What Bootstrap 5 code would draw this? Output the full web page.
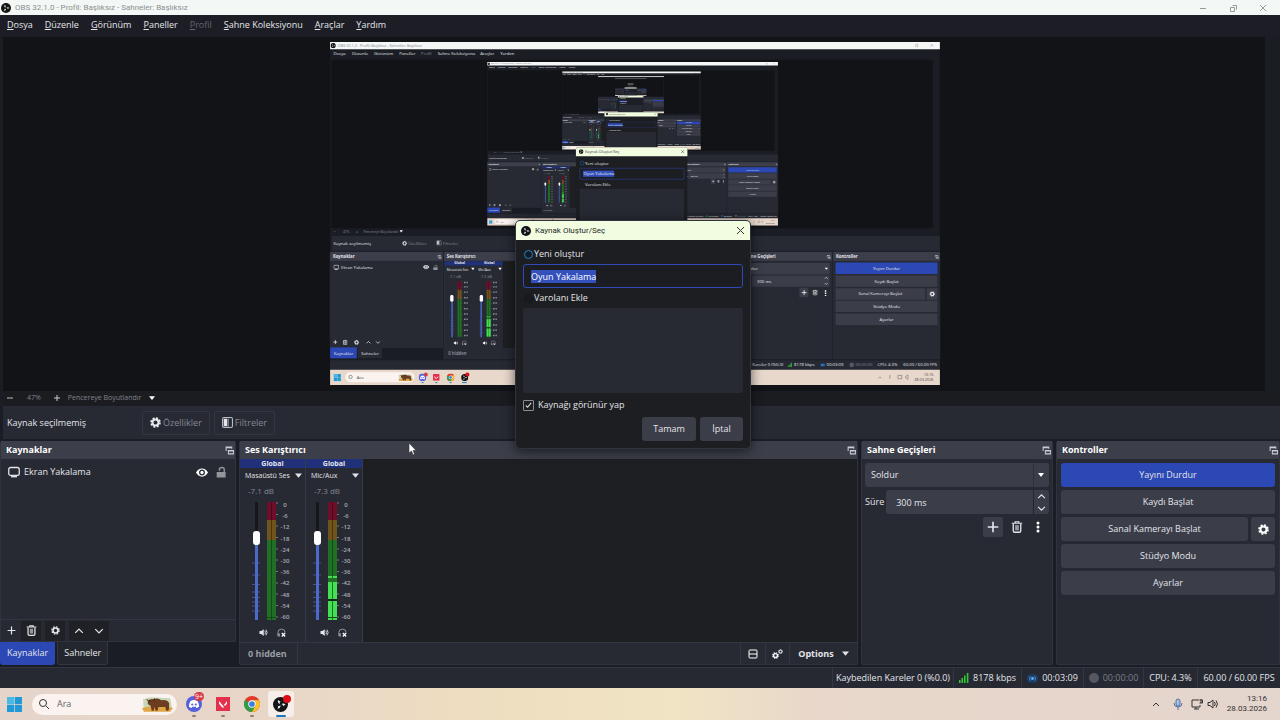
<!DOCTYPE html>
<html lang="tr" data-bs-theme="dark">
<head>
<meta charset="utf-8">
<meta name="viewport" content="width=device-width, initial-scale=1">
<title>OBS 32.1.0</title>
<link href="https://cdn.jsdelivr.net/npm/bootstrap@5.3.0/dist/css/bootstrap.min.css" rel="stylesheet">
<style>
:root{--win:#1e1f24;--panel:#272a33;--head:#3c3f4a;--ctl:#3b3d49;--blue:#2c48b4;--line:#363944;--ink:#e4e5e9;--dim:#858892}
body{font:9px/12px "Open Sans","Noto Sans",sans-serif;color:var(--ink);background:#1b1d25;overflow:hidden}
svg{display:block;flex:none}
button,.btn{font:inherit;color:inherit}
a{color:inherit;text-decoration:none}
.titlebar{height:15px;background:#f3f7f5;color:#8d9090;font-family:Roboto,sans-serif;font-size:8px;padding:0 13px 0 1px}
.menubar{height:20px;background:#1d1e25;padding:0 7px}
.menubar a{padding:0;margin-right:12px}
.menubar a::first-letter{text-decoration:underline}
.menubar .disabled{color:#63656e}
.stage{background:#121317;margin:2px 15px 0 3px;padding:5px 0 6px 2px;height:354px;min-height:0}
.zoombar{height:14px;background:#1b1c20;margin-left:3px;color:#7f828b;font-size:7px;padding-left:4px}
.flat{background:none;border:0;padding:0;display:flex;align-items:center;justify-content:center}
.srcbar{height:33px;background:var(--panel);margin:1px 0 2px 3px;padding-left:4px}
.ghost{height:24px;border:1px solid #343741;border-radius:2px;background:none;color:#858892;padding:0 7px;display:flex;align-items:center;gap:2px}
.docks{gap:3px;height:224px}
.dock{background:var(--panel);border:1px solid #30333d;border-top:0;border-radius:2px}
.dock-title{height:18px;background:var(--head);font-weight:700;font-size:9px;margin:0;padding:0 1px 0 5px;line-height:12px}
.left{width:236px}.trans{width:192px}.ctrl{width:224px}
.src-row{height:26px;padding:0 8px 0 7px}
.toolrow{height:22px;border-top:1px solid #343741}
.tool{width:20px;height:20px;background:#1f2127;border-radius:2px}
.tabx{height:23px;border:1px solid #343741;border-top:0;background:#23262d;padding:0 6px;border-radius:0 0 3px 3px}
.tabx.on{background:var(--blue);border-color:var(--blue)}
.strip{width:66px;--inset:12px;background:var(--panel);border-right:1px solid #373b48}
.strip.narrow{width:57px;--inset:7px}
.strip-tag{height:9px;background:#203079;font-size:7px;font-weight:700;line-height:9px}
.strip-name{height:15px;font-size:7px;padding:0 3px 0 5px;white-space:nowrap}
.db{height:16px;font-size:8px;line-height:16px;padding-left:8px;color:#858892}
.meter{height:118px;padding-left:var(--inset);margin-top:3px}
.track{margin-right:7px}
.listen{padding-left:calc(var(--inset) + 7px);gap:8px}
.fader{-webkit-appearance:none;appearance:none;writing-mode:vertical-lr;direction:rtl;width:8px;height:118px;margin:0;padding:0;background:linear-gradient(#17181c 0 36px,#4c69cc 36px) center/3px 100% no-repeat}
.fader::-webkit-slider-runnable-track{background:none}
.fader::-webkit-slider-thumb{-webkit-appearance:none;width:7px;height:14px;background:#fff;border-radius:3px}
.scale{font-size:6px;line-height:6px;font-weight:600;color:#a9acb5;width:14px;text-align:center}
.mixfoot{height:22px;border-top:1px solid #343741;font-weight:700;line-height:12px}
.mixfoot>*{border-left:1px solid #343741;height:100%}
.field{background-color:var(--ctl);border:0;border-radius:3px;color:var(--ink);font:inherit;height:24px;min-width:0}
.pick{-webkit-appearance:none;appearance:none;padding:0 6px;background-image:url("data:image/svg+xml,%3Csvg xmlns='http://www.w3.org/2000/svg' viewBox='0 0 16 24'%3E%3Cpath d='M0 0v24' stroke='%2323252c'/%3E%3Cpath d='M5 10h6l-3 4z' fill='%23fff'/%3E%3C/svg%3E");background-repeat:no-repeat;background-position:right center;background-size:16px 24px}
.spin{width:16px;border-left:1px solid #23252c;background:var(--ctl);border-radius:0 3px 3px 0}
.wide{background:var(--ctl);border:0;border-radius:3px;height:24px;padding:0}
.wide.on{background:var(--blue)}
.status{height:21px;background:#262932;border-top:1px solid #343741;margin-top:2px}
.status>div{border-left:1px solid #343741;display:flex;align-items:center;justify-content:center;gap:4px;white-space:nowrap}
.taskbar{height:32px;background:linear-gradient(90deg,#e5d4ca 0,#e8d7c8 22%,#eeddc0 36%,#f0e4c4 53%,#e8d7ca 64%,#e4d5cd 100%);color:#333;padding:0 13px 0 7px}
.find{width:145px;height:21px;border-radius:11px;background:#faf3ef;padding:0 4px 0 7px;margin:0 10px}
.find input{border:0;background:none;outline:0;width:70px;font-size:9px;color:#333;padding:0}
.find input::placeholder{color:#666;opacity:1}
.app{width:26px;height:26px;margin-right:3px;border-radius:3px;position:relative}
.app.on{background:#f6efe9}
.app::after{content:"";position:absolute;left:11px;bottom:0;width:4px;height:2px;border-radius:1px;background:#8b807b}
.app.on::after{left:8px;width:10px;background:#1c78c4}
.count{position:absolute;left:13px;top:1px;background:#d33c48;color:#fff;font-size:7px;line-height:9px;border-radius:5px;padding:0 1px}
.chev{margin-right:13px}
.clock{font-family:Roboto,sans-serif;font-size:8px;line-height:10px}
.dlg{position:absolute;left:515px;top:220px;width:236px;background:#1d1e22;border:1px solid #30343c;border-radius:5px;overflow:hidden;box-shadow:0 2px 12px #0009}
.dlg-title{height:19px;background:#f1fce1;color:#252a25;font-family:Roboto,sans-serif;font-size:8px;padding:0 5px}
.dlg-body{padding:8px 7px 7px}
.dlg .row-opt{height:12px}
.ring{-webkit-appearance:none;appearance:none;width:9px;height:9px;border:1px solid #17181b;border-radius:50%;margin:0 1px;background:#191a1d}
.ring:checked{border-color:#1c86d6}
.name-in{background:#1c1d22;border:1px solid #2f4bb8;border-radius:3px;height:24px;padding:0 7px;outline:0;color:#fff}
.name-in::selection{background:#3350bd;color:#fff}
.listing{height:85px;background:var(--panel);border-radius:3px}
.visible-opt{gap:4px;margin-top:6px}
.answers{gap:4px;margin-top:6px}
.tick{-webkit-appearance:none;appearance:none;width:11px;height:11px;margin:0;border:1px solid #8b8d92;border-radius:1px;background:url("data:image/svg+xml,%3Csvg xmlns='http://www.w3.org/2000/svg' viewBox='0 0 10 10'%3E%3Cpath d='M2 5l2 2 4-5' fill='none' stroke='%23dddddd' stroke-width='1.2'/%3E%3C/svg%3E")}
.answer{height:24px;background:var(--ctl);border:0;border-radius:3px}
.pointer{position:absolute;left:408px;top:442px}
.preview text{font-family:"Open Sans","Noto Sans",sans-serif;font-size:9px;fill:#e4e5e9}
.preview .b{font-weight:700}.preview .g{fill:#858892}.preview .k{fill:#444}.preview .c{text-anchor:middle}
.preview .e{font-size:8px}.preview .t{font-size:7px}
</style>
</head>
<body class="d-flex flex-column min-vh-100">
<svg width="0" height="0" class="position-absolute" aria-hidden="true">
  <symbol id="i-obs" viewBox="0 0 20 20"><circle cx="10" cy="10" r="10" fill="#121416"/><g fill="#e6e9e7" transform="translate(1.500 1.500) scale(.85)"><path id="b1" d="M6.500 2.500C5 5 6 8.500 9.300 9.300 8.300 7.500 8.500 6 10.500 5.300 9 5 7 4.500 6.500 2.500z"/><use href="#b1" transform="rotate(120 10 10)"/><use href="#b1" transform="rotate(240 10 10)"/></g></symbol>
  <symbol id="i-gear" viewBox="0 0 16 16"><circle cx="8" cy="8" r="4.400" fill="none" stroke="currentColor" stroke-width="3"/><circle cx="8" cy="8" r="6.500" fill="none" stroke="currentColor" stroke-width="2.400" stroke-dasharray="2.900 2.205"/></symbol>
  <symbol id="i-pop" viewBox="0 0 16 16"><path d="M2 9V2h10v3M2 3h10" fill="none" stroke="#c9ccd3" stroke-width="1.800"/><path d="M6 8h9v6H6zM6 9h9" fill="none" stroke="#c9ccd3" stroke-width="1.800"/></symbol>
  <symbol id="i-trash" viewBox="0 0 16 16"><path d="M1 3h14M5.500 2.500V1h5v1.500" fill="none" stroke="currentColor" stroke-width="1.600"/><path d="M3 3.500V13q0 2 2 2h6q2 0 2-2V3.500" fill="none" stroke="currentColor" stroke-width="1.800"/><path d="M5.500 5.500h5v7h-5z" fill="currentColor" opacity=".6"/></symbol>
  <symbol id="i-plus" viewBox="0 0 16 16"><path d="M8 1v14M1 8h14" stroke="currentColor" stroke-width="2.200"/></symbol>
  <symbol id="i-up" viewBox="0 0 16 16"><path d="M2 11l6-6 6 6" fill="none" stroke="currentColor" stroke-width="2"/></symbol>
  <symbol id="i-down" viewBox="0 0 16 16"><path d="M2 5l6 6 6-6" fill="none" stroke="currentColor" stroke-width="2"/></symbol>
  <symbol id="i-tri" viewBox="0 0 16 16"><path d="M0 3.500h16L8 13z" fill="currentColor"/></symbol>
  <symbol id="i-screen" viewBox="0 0 16 16"><rect x="1" y="2" width="14" height="10.500" rx="2.500" fill="none" stroke="currentColor" stroke-width="1.700"/><path d="M4 14.300h8" stroke="currentColor" stroke-width="1.800"/></symbol>
  <symbol id="i-eye" viewBox="0 0 16 16"><path d="M0 8Q3 2.500 8 2.500T16 8Q13 13.500 8 13.500T0 8z" fill="#fff"/><circle cx="8" cy="8" r="3.900" fill="#272a33"/><circle cx="8" cy="8" r="2.200" fill="#fff"/></symbol>
  <symbol id="i-lock" viewBox="0 0 16 16"><rect x="1" y="8" width="13" height="8" fill="#94969c"/><path d="M5 6V4.500Q5 1.500 8.500 1.500T12 4.500V8" fill="none" stroke="#94969c" stroke-width="2"/></symbol>
  <symbol id="i-filter" viewBox="0 0 16 16"><rect x=".8" y=".8" width="14.400" height="14.400" rx="2" fill="none" stroke="#b9bbc2" stroke-width="1.600"/><path d="M2.500 2.500h5v11h-5z" fill="#e5e6ea"/><path d="M8 2h2v12H8z" fill="#888b94"/></symbol>
  <symbol id="i-vol" viewBox="0 0 16 16"><path d="M0 5.500h3L7.500 2v12L3 10.500H0z" fill="currentColor"/><path d="M9.500 5q2.200 3 0 6M11.500 3q4 5 0 10" fill="none" stroke="currentColor" stroke-width="1.600"/></symbol>
  <symbol id="i-mon" viewBox="0 0 16 16"><path d="M2 14H1.500V8q0-6 6.500-6t6.500 6" fill="none" stroke="#9a9ca4" stroke-width="1.600"/><path d="M2 9.500h3V15H2z" fill="#9a9ca4"/><path d="M8.500 9l6 6M14.500 9l-6 6" stroke="#fff" stroke-width="2.200"/></symbol>
  <symbol id="i-win" viewBox="0 0 16 16"><path d="M0 0h7.600v7.600H0zM8.400 0H16v7.600H8.400zM0 8.400h7.600V16H0zM8.400 8.400H16V16H8.400z" fill="#1f9ad6"/><path d="M0 0h7.600v7.600H0z" fill="#4bb9e6"/></symbol>
  <symbol id="i-bison" viewBox="0 0 32 16"><path d="M1 3l8-2 20 1 2 10-6 3H2z" fill="#c9d7b9"/><path d="M0 12q14-4 32 0l-3 4H2z" fill="#e0a646"/><path d="M6 5q2-3 7-2 3-2 7 1 6-1 8 3v6l-1 2h-2l-1-4-7 0-1 4h-2l-1-4-1 4h-2l-1-5-3-2z" fill="#6d3d22"/><path d="M5 3q1 3 4 2M13 2q1 2-1 3" stroke="#3f2415" fill="none"/></symbol>
  <symbol id="i-discord" viewBox="0 0 18 18"><circle cx="9" cy="9" r="9" fill="#5560dd"/><path d="M5 5.500q4-1.800 8 0 2 3.500 1.700 6.500-1.500 1.200-3 1.400l-.7-1.200H7l-.7 1.200q-1.500-.2-3-1.400Q3 9 5 5.500z" fill="#fff"/><circle cx="7" cy="9.500" r="1.200" fill="#5560dd"/><circle cx="11" cy="9.500" r="1.200" fill="#5560dd"/></symbol>
  <symbol id="i-val" viewBox="0 0 16 16"><path d="M0 0h16v16H0z" fill="#e5304d"/><path d="M3.500 4.500v3.200L7 12h2.600zM12.500 4.500v3.200l-1.600 2H8.800z" fill="#fff"/></symbol>
  <symbol id="i-chrome" viewBox="0 0 18 18"><circle cx="9" cy="9" r="9" fill="#e23b2e"/><path d="M9 9L1.200 4.500A9 9 0 0 0 9 18l4-7z" fill="#2e9e4a"/><path d="M9 4.800h7.900A9 9 0 0 1 9 18l4-7z" fill="#f7c325"/><circle cx="9" cy="9" r="4.200" fill="#fff"/><circle cx="9" cy="9" r="3.200" fill="#3b7de0"/></symbol>
  <symbol id="i-bars" viewBox="0 0 16 16"><path d="M0 11h2.500v5H0zM4 8h2.500v8H4zM8 4h2.500v12H8zM12.500 0H15v16h-2.500z" fill="#35c935"/></symbol>
  <symbol id="i-cast" viewBox="0 0 18 14"><rect width="18" height="14" rx="6" fill="#1f3c66"/><circle cx="9" cy="7" r="2.400" fill="#62b0f5"/><path d="M5.500 3.500q-3 3.500 0 7M12.500 3.500q3 3.500 0 7" fill="none" stroke="#4d9be6" stroke-width="1.500"/></symbol>
  <symbol id="i-meter" viewBox="0 0 14 118"><path d="M0 0h9v18H0z" fill="#6e0e2b"/><path d="M0 18h9v20H0z" fill="#70541b"/><path d="M0 38h9v80H0z" fill="#1f7025"/><path d="M4.500 0v118M0 115.500h9" stroke="#000" stroke-opacity=".35"/><path d="M9 1h2M9 12.500h2M9 24h2M9 35.500h2M9 47h2M9 58h2M9 69.500h2M9 81h2M9 92h2M9 103.500h2M9 115h2" stroke="#777a83"/></symbol>
  <symbol id="i-live" viewBox="0 0 14 118"><path d="M0 74h9v2H0zM0 80h9v17H0zM0 99h9v16H0zM0 116h9v2H0z" fill="#43df55"/><path d="M4.500 74v44" stroke="#1f7025"/><path d="M0 98h9" stroke="#111" stroke-width="1.500"/></symbol>
  <symbol id="i-notch" viewBox="0 0 8 118"><path d="M0 61h8M0 73h8M0 82.500h8M0 90h8M0 95.500h8M0 100h8M0 104h8M0 109h8" stroke="#43538f"/></symbol>
</svg>

<header class="titlebar d-flex align-items-center">
  <svg width="10" height="10"><use href="#i-obs"/></svg><span class="ms-1">OBS 32.1.0 - Profil: Başlıksız - Sahneler: Başlıksız</span>
  <div class="ms-auto d-flex align-items-center" style="gap:22px">
    <button class="flat" aria-label="Küçült"><svg width="8" height="8"><path d="M1 4.500h6" stroke="#999"/></svg></button>
    <button class="flat" aria-label="Geri yükle"><svg width="8" height="8" fill="none" stroke="#999"><path d="M1.500 3.500h4v4h-4zM3.500 1.500h4v4"/></svg></button>
    <button class="flat" aria-label="Kapat"><svg width="8" height="8"><path d="M1 1l6 6M7 1L1 7" stroke="#999"/></svg></button>
  </div>
</header>
<nav class="menubar d-flex align-items-center">
  <a href="#" class="d-block">Dosya</a><a href="#" class="d-block">Düzenle</a><a href="#" class="d-block">Görünüm</a><a href="#" class="d-block">Paneller</a><a href="#" class="d-block disabled">Profil</a><a href="#" class="d-block">Sahne Koleksiyonu</a><a href="#" class="d-block">Araçlar</a><a href="#" class="d-block">Yardım</a>
</nav>

<main class="d-flex flex-column flex-grow-1">
<section class="stage flex-grow-1">
<svg class="preview w-100 h-100" viewBox="0 0 1280 720" role="img" aria-label="Önizleme">
  <defs>
    <g id="lv5"><use href="#desk"/><use href="#pop"/></g>
    <g id="lv4"><use href="#desk"/><use href="#lv5" transform="translate(330 42) scale(.4766)"/><use href="#pop"/></g>
    <g id="lv3"><use href="#desk"/><use href="#lv4" transform="translate(330 42) scale(.4766)"/><use href="#pop"/></g>
    <g id="lv2"><use href="#desk"/><use href="#lv3" transform="translate(330 42) scale(.4766)"/><use href="#pop"/></g>
  </defs>
  <g id="desk">
    <path d="M0 0h1280v720H0z" fill="#1b1d25"/><path d="M0 0h1280v15H0z" fill="#f3f7f5"/>
    <use href="#i-obs" x="1" y="2" width="11" height="11"/><text class="g e" x="16" y="11">OBS 32.1.2 - Profil: Başlıksız - Sahneler: Başlıksız</text>
    <path d="M1229 5h5v5h-5zM1260 4l6 6M1266 4l-6 6" stroke="#999" fill="none"/>
    <text x="7" y="28">Dosya</text><text x="46" y="28">Düzenle</text><text x="92" y="28">Görünüm</text><text x="145" y="28">Paneller</text><text class="g" x="191" y="28">Profil</text><text x="226" y="28">Sahne Koleksiyonu</text><text x="315" y="28">Araçlar</text><text x="357" y="28">Yardım</text>
    <path d="M3 37h1262v354H3z" fill="#121317"/>
    <text class="g" x="7" y="401">−</text><text class="g t" x="27" y="401">47%</text><text x="54" y="401">+</text><text class="g t" x="70" y="401">Pencereye Boyutlandır</text><path d="M146 395h7l-4 5z" fill="#fff"/>
    <path d="M3 407h1277v31H3z" fill="#272a33"/><text x="7" y="426">Kaynak seçilmemiş</text>
    <g color="#eee"><use href="#i-gear" x="151" y="417" width="11" height="11"/></g><text class="g" x="164" y="426">Özellikler</text><use href="#i-filter" x="223" y="416" width="11" height="11"/><text class="g" x="237" y="426">Filtreler</text>
    <path d="M0 441h236v200H0zM239 441h619v224H239zM861 441h192v224H861zM1056 441h224v224h-224z" fill="#272a33" stroke="#343741"/>
    <path d="M363 460h494v182H363z" fill="#1e1f22"/>
    <path d="M0 441h236v18H0zM239 441h619v18H239zM861 441h192v18H861zM1056 441h224v18h-224z" fill="#3c3f4a"/>
    <text class="b" x="6" y="454">Kaynaklar</text><text class="b" x="245" y="454">Ses Karıştırıcı</text><text class="b" x="867" y="454">Sahne Geçişleri</text><text class="b" x="1062" y="454">Kontroller</text>
    <use href="#i-pop" x="225" y="447" width="9" height="9"/><use href="#i-pop" x="848" y="447" width="9" height="9"/><use href="#i-pop" x="1042" y="447" width="9" height="9"/><use href="#i-pop" x="1269" y="447" width="9" height="9"/>
    <g color="#fff"><use href="#i-screen" x="7" y="467" width="12" height="12"/><use href="#i-eye" x="195" y="466" width="13" height="13"/><use href="#i-lock" x="216" y="467" width="11" height="12"/>
    <use href="#i-plus" x="6" y="625" width="10" height="10"/><use href="#i-trash" x="26" y="625" width="11" height="11"/><use href="#i-gear" x="50" y="625" width="11" height="11"/><use href="#i-up" x="75" y="625" width="11" height="11"/><use href="#i-down" x="95" y="625" width="11" height="11"/></g>
    <text x="23" y="476">Ekran Yakalama</text>
    <path d="M0 641h56v23H0z" fill="#2c48b4"/><path d="M58 641h51v23H58z" fill="#272a33"/><text class="c" x="28" y="656">Kaynaklar</text><text class="c" x="84" y="656">Sahneler</text>
    <path d="M240 460h122v9H240z" fill="#203079"/><text class="b c t" x="272" y="467">Global</text><text class="b c t" x="334" y="467">Global</text>
    <text class="t" x="245" y="480">Masaüstü Ses</text><text class="t" x="311" y="480">Mic/Aux</text><path d="M296 474h7l-3 5zM353 474h7l-3 5z" fill="#fff"/>
    <text class="g e" x="249" y="495">-7.1 dB</text><text class="g e" x="314" y="495">-7.3 dB</text>
    <path d="M256 545v75M317 545v75" stroke="#4c69cc" stroke-width="3"/><rect x="252" y="531" width="7" height="14" rx="3" fill="#fff"/><rect x="314" y="531" width="7" height="14" rx="3" fill="#fff"/>
    <use href="#i-notch" x="252" y="502" width="8" height="118"/><use href="#i-notch" x="313" y="502" width="8" height="118"/><use href="#i-meter" x="267" y="502" width="14" height="118"/><use href="#i-meter" x="328" y="502" width="14" height="118"/><use href="#i-live" x="328" y="502" width="14" height="118"/>
    <path d="M281 505h9M281 514h9M281 525h9M281 537h9M281 548h9M281 560h9M281 571h9M281 582h9M281 594h9M281 605h9M281 616h9M342 505h9M342 514h9M342 525h9M342 537h9M342 548h9M342 560h9M342 571h9M342 582h9M342 594h9M342 605h9M342 616h9" stroke="#8e9199" stroke-width="3" stroke-dasharray="2 1"/>
    <g color="#fff"><use href="#i-vol" x="259" y="627" width="11" height="10"/><use href="#i-mon" x="276" y="626" width="11" height="11"/><use href="#i-vol" x="320" y="627" width="11" height="10"/><use href="#i-mon" x="337" y="626" width="11" height="11"/></g>
    <text class="g b" x="248" y="657">0 hidden</text>
    <path d="M865 464h184v24H865zM886 490h163v24H886zM985 516h19v20h-19zM1061 490h214v24h-214zM1061 517h188v24h-188zM1252 517h23v24h-23zM1061 543h214v24h-214zM1061 570h214v24h-214z" fill="#3b3d49"/><path d="M1061 463h214v24h-214z" fill="#2c48b4"/>
    <text x="871" y="479">Soldur</text><text x="865" y="506">Süre</text><text x="896" y="506">300 ms</text><path d="M1038 474h7l-3 4z" fill="#fff"/>
    <g color="#fff"><use href="#i-up" x="1037" y="491" width="9" height="9"/><use href="#i-down" x="1037" y="503" width="9" height="9"/><use href="#i-plus" x="989" y="520" width="12" height="12"/><use href="#i-trash" x="1012" y="520" width="12" height="12"/><use href="#i-gear" x="1258" y="523" width="12" height="12"/></g><path d="M1040 521v12" stroke="#fff" stroke-width="3" stroke-dasharray="3 2"/>
    <text class="c" x="1168" y="479">Yayını Durdur</text><text class="c" x="1168" y="505">Kaydı Başlat</text><text class="c" x="1155" y="532">Sanal Kamerayı Başlat</text><text class="c" x="1168" y="559">Stüdyo Modu</text><text class="c" x="1168" y="585">Ayarlar</text>
    <path d="M0 668h1280v20H0z" fill="#262932"/><text x="838" y="681">Kaybedilen Kareler 0 (%0.0)</text><use href="#i-bars" x="960" y="673" width="10" height="10"/><text x="974" y="681">8178 kbps</text><use href="#i-cast" x="1028" y="673" width="12" height="10"/><text x="1042" y="681">00:03:09</text><circle cx="1095" cy="678" r="5" fill="#555861"/><text class="g" x="1103" y="681">00:00:00</text><text x="1149" y="681">CPU: 4.3%</text><text x="1203" y="681">60.00 / 60.00 FPS</text>
    <path d="M0 688h1280v32H0z" fill="#e8d8cc"/><use href="#i-win" x="7" y="697" width="16" height="15"/><rect x="32" y="693" width="145" height="21" rx="10" fill="#faf3ef"/><circle cx="43" cy="703" r="3.500" fill="none" stroke="#333"/><text class="k" x="56" y="708">Ara</text><use href="#i-bison" x="143" y="696" width="31" height="16"/>
    <use href="#i-discord" x="186" y="696" width="16" height="16"/><circle cx="201" cy="698" r="4" fill="#d33c48"/><use href="#i-val" x="216" y="697" width="14" height="14"/><use href="#i-chrome" x="245" y="696" width="16" height="16"/><use href="#i-obs" x="275" y="697" width="15" height="15"/><circle cx="288" cy="698" r="4.500" fill="#d90f1c"/><path d="M192 715h4M221 715h4M251 715h4M277 715h10" stroke="#1c78c4" stroke-width="2"/>
    <path d="M1151 706l3-3 3 3M1175 699v8M1192 700h8v7h-8zM1208 702l5-3v9l-5-3z" fill="none" stroke="#555"/><text class="k e" x="1246" y="702">13:16</text><text class="k e" x="1226" y="712">28.03.2026</text>
  </g>
  <use href="#lv2" transform="translate(330 42) scale(.4766)"/>
  <g id="pop">
    <rect x="516" y="221" width="234" height="228" rx="5" fill="#1d1e22"/><path d="M516 240v-14q0-5 5-5h224q5 0 5 5v14z" fill="#f1fce1"/><use href="#i-obs" x="522" y="225" width="10" height="10"/><text class="k e" x="535" y="234">Kaynak Oluştur/Seç</text><path d="M737 227l6 6M743 227l-6 6" stroke="#333"/>
    <circle cx="529" cy="254" r="4" fill="none" stroke="#1c72ba"/><text x="535" y="258">Yeni oluştur</text><rect x="524" y="265" width="219" height="23" rx="2" fill="none" stroke="#2f4bb8"/><path d="M531 270h65v13h-65z" fill="#3350bd"/><text x="532" y="280">Oyun Yakalama</text><text x="535" y="302">Varolanı Ekle</text><path d="M524 308h219v85H524z" fill="#272a33"/>
  </g>
</svg>
</section>
<div class="zoombar d-flex align-items-center">
  <button class="flat" aria-label="Uzaklaştır"><svg width="6" height="6"><path d="M0 3h6" stroke="#bbb"/></svg></button>
  <span style="margin:0 13px 0 14px">47%</span>
  <button class="flat" aria-label="Yakınlaştır"><svg width="6" height="6"><path d="M0 3h6M3 0v6" stroke="#ccc"/></svg></button>
  <button class="flat text-white ms-2 gap-2"><span style="color:#7f828b">Pencereye Boyutlandır</span><svg width="6" height="6"><use href="#i-tri"/></svg></button>
</div>
<div class="srcbar d-flex align-items-center">
  <span style="width:135px">Kaynak seçilmemiş</span>
  <button class="ghost me-1"><svg width="11" height="11" color="#e8e9ec"><use href="#i-gear"/></svg>Özellikler</button>
  <button class="ghost"><svg width="11" height="11"><use href="#i-filter"/></svg>Filtreler</button>
</div>

<div class="docks d-flex">
  <section class="left d-flex flex-column">
    <div class="dock flex-grow-1 d-flex flex-column">
      <h2 class="dock-title d-flex align-items-center justify-content-between">Kaynaklar<svg width="9" height="9"><use href="#i-pop"/></svg></h2>
      <div class="src-row d-flex align-items-center gap-1"><svg width="12" height="12"><use href="#i-screen"/></svg>Ekran Yakalama
        <button class="flat ms-auto" aria-label="Göster"><svg width="12" height="13"><use href="#i-eye"/></svg></button><button class="flat ms-1" aria-label="Kilitle"><svg width="11" height="12"><use href="#i-lock"/></svg></button></div>
      <div class="toolrow mt-auto d-flex align-items-center">
        <button class="flat tool bg-transparent" aria-label="Ekle"><svg width="9" height="9"><use href="#i-plus"/></svg></button>
        <button class="flat tool me-1" aria-label="Sil"><svg width="11" height="11"><use href="#i-trash"/></svg></button>
        <button class="flat tool me-1" aria-label="Özellikler"><svg width="9" height="9"><use href="#i-gear"/></svg></button>
        <button class="flat tool" aria-label="Yukarı"><svg width="10" height="10"><use href="#i-up"/></svg></button>
        <button class="flat tool" aria-label="Aşağı"><svg width="10" height="10"><use href="#i-down"/></svg></button>
      </div>
    </div>
    <div class="d-flex" style="gap:2px"><button class="tabx on">Kaynaklar</button><button class="tabx">Sahneler</button></div>
  </section>

  <section class="dock flex-grow-1 d-flex flex-column" style="min-width:0">
    <h2 class="dock-title d-flex align-items-center justify-content-between">Ses Karıştırıcı<svg width="9" height="9"><use href="#i-pop"/></svg></h2>
    <div class="d-flex flex-grow-1 pt-0" style="background:#1e1f22">
      <div class="strip">
        <div class="strip-tag text-center">Global</div>
        <button class="strip-name flat w-100 justify-content-between">Masaüstü Ses<svg width="7" height="7"><use href="#i-tri"/></svg></button>
        <div class="db">-7.1 dB</div>
        <div class="meter d-flex"><div class="track position-relative"><svg class="position-absolute" width="8" height="118"><use href="#i-notch"/></svg><input class="fader position-relative d-block" type="range" aria-label="Masaüstü Ses" value="72"></div>
          <svg width="11" height="118" viewBox="0 0 11 118"><use href="#i-meter" width="14" height="118"/></svg>
          <div class="scale d-flex flex-column justify-content-between"><span>0</span><span>-6</span><span>-12</span><span>-18</span><span>-24</span><span>-30</span><span>-36</span><span>-42</span><span>-48</span><span>-54</span><span>-60</span></div></div>
        <div class="listen d-flex mt-2"><button class="flat" aria-label="Sessiz"><svg width="10" height="9"><use href="#i-vol"/></svg></button><button class="flat" aria-label="Dinle"><svg width="9" height="9"><use href="#i-mon"/></svg></button></div>
      </div>
      <div class="strip narrow">
        <div class="strip-tag text-center">Global</div>
        <button class="strip-name flat w-100 justify-content-between">Mic/Aux<svg width="7" height="7"><use href="#i-tri"/></svg></button>
        <div class="db">-7.3 dB</div>
        <div class="meter d-flex"><div class="track position-relative"><svg class="position-absolute" width="8" height="118"><use href="#i-notch"/></svg><input class="fader position-relative d-block" type="range" aria-label="Mic/Aux" value="72"></div>
          <svg width="11" height="118" viewBox="0 0 11 118"><use href="#i-meter" width="14" height="118"/><use href="#i-live" width="14" height="118"/></svg>
          <div class="scale d-flex flex-column justify-content-between"><span>0</span><span>-6</span><span>-12</span><span>-18</span><span>-24</span><span>-30</span><span>-36</span><span>-42</span><span>-48</span><span>-54</span><span>-60</span></div></div>
        <div class="listen d-flex mt-2"><button class="flat" aria-label="Sessiz"><svg width="10" height="9"><use href="#i-vol"/></svg></button><button class="flat" aria-label="Dinle"><svg width="9" height="9"><use href="#i-mon"/></svg></button></div>
      </div>
    </div>
    <div class="mixfoot d-flex" style="background:var(--panel)">
      <span class="d-flex align-items-center border-0" style="width:57px;padding-left:8px;color:#9b9da5">0 hidden</span><span class="flex-grow-1"></span>
      <button class="flat" style="width:25px" aria-label="Düzen"><svg width="10" height="10" fill="none" stroke="#fff"><rect x="1" y="1" width="8" height="8" rx="1"/><path d="M1 5h8"/></svg></button>
      <button class="flat" style="width:24px" aria-label="Ayarlar"><svg width="11" height="11" color="#fff"><use href="#i-gear" y="4" width="7" height="7"/><use href="#i-gear" x="6" y="1" width="5" height="5"/></svg></button>
      <button class="flat gap-2" style="width:68px">Options<svg width="7" height="7"><use href="#i-tri"/></svg></button>
    </div>
  </section>

  <section class="dock trans">
    <h2 class="dock-title d-flex align-items-center justify-content-between">Sahne Geçişleri<svg width="9" height="9"><use href="#i-pop"/></svg></h2>
    <div class="d-flex flex-column" style="padding:4px 3px;gap:3px">
      <select class="field pick w-100" aria-label="Geçiş"><option>Soldur</option></select>
      <div class="d-flex align-items-center" style="gap:2px"><label for="dur">Süre</label>
        <div class="d-flex flex-grow-1"><input id="dur" class="field flex-grow-1 rounded-end-0" style="width:50px;padding:0 10px" value="300 ms"><div class="spin d-flex flex-column justify-content-around align-items-center"><button class="flat" aria-label="Artır"><svg width="9" height="9"><use href="#i-up"/></svg></button><button class="flat" aria-label="Azalt"><svg width="9" height="9"><use href="#i-down"/></svg></button></div></div></div>
      <div class="d-flex justify-content-end gap-1"><button class="flat tool" style="background:var(--ctl)" aria-label="Ekle"><svg width="12" height="12"><use href="#i-plus"/></svg></button><button class="flat tool bg-transparent" aria-label="Sil"><svg width="12" height="12"><use href="#i-trash"/></svg></button><button class="flat pe-1" style="width:18px" aria-label="Menü"><svg width="4" height="12" fill="#fff"><circle cx="2" cy="2" r="1.500"/><circle cx="2" cy="6" r="1.500"/><circle cx="2" cy="10" r="1.500"/></svg></button></div>
    </div>
  </section>

  <section class="dock ctrl">
    <h2 class="dock-title d-flex align-items-center justify-content-between">Kontroller<svg width="9" height="9"><use href="#i-pop"/></svg></h2>
    <div class="d-flex flex-column" style="padding:4px;gap:3px">
      <button class="wide on">Yayını Durdur</button><button class="wide">Kaydı Başlat</button>
      <div class="d-flex" style="gap:3px"><button class="wide flex-grow-1">Sanal Kamerayı Başlat</button><button class="wide flat" style="width:24px;background:var(--ctl)" aria-label="Sanal kamera ayarları"><svg width="11" height="11" color="#fff"><use href="#i-gear"/></svg></button></div>
      <button class="wide">Stüdyo Modu</button><button class="wide">Ayarlar</button>
    </div>
  </section>
</div>

<footer class="status d-flex justify-content-end">
  <div style="width:121px">Kaybedilen Kareler 0 (%0.0)</div>
  <div style="width:68px"><svg width="10" height="10"><use href="#i-bars"/></svg>8178 kbps</div>
  <div style="width:62px"><svg width="11" height="9"><use href="#i-cast"/></svg>00:03:09</div>
  <div style="width:60px;color:#7b7e87"><svg width="10" height="10"><circle cx="5" cy="5" r="5" fill="#555861"/></svg>00:00:00</div>
  <div style="width:54px">CPU: 4.3%</div>
  <div style="width:83px">60.00 / 60.00 FPS</div>
</footer>
</main>

<div class="taskbar d-flex align-items-center">
  <button class="flat" aria-label="Başlat"><svg width="15" height="15"><use href="#i-win"/></svg></button>
  <div class="find d-flex align-items-center"><svg width="10" height="10" fill="none" stroke="#333" class="me-2"><circle cx="4" cy="4" r="3.500"/><path d="M7 7l3 3"/></svg><input type="text" placeholder="Ara" aria-label="Ara"><svg class="ms-auto" width="31" height="16"><use href="#i-bison"/></svg></div>
  <button class="flat app" style="margin-left:-6px" aria-label="Discord"><svg width="16" height="16"><use href="#i-discord"/></svg><span class="count">9+</span></button>
  <button class="flat app" aria-label="Valorant"><svg width="14" height="14"><use href="#i-val"/></svg></button>
  <button class="flat app" aria-label="Chrome"><svg width="16" height="16"><use href="#i-chrome"/></svg></button>
  <button class="flat app on" aria-label="OBS"><svg width="20" height="20"><use href="#i-obs" x="2" y="3" width="15" height="15"/><circle cx="16" cy="5" r="4" fill="#df0c18"/></svg></button>
  <div class="ms-auto d-flex align-items-center">
    <svg width="8" height="8" class="chev"><path d="M1 6l3-3 3 3" fill="none" stroke="#333"/></svg>
    <svg width="10" height="12" class="me-2" fill="none" stroke="#5472a0"><rect x="3" y="1" width="4" height="7" rx="2" fill="#a8bfe4"/><path d="M1 5q0 4 4 4t4-4M5 9v3"/></svg>
    <svg width="12" height="12" class="me-1" fill="none" stroke="#333"><path d="M8 2H1v7h8V7M3 11h5M5 9v2M10 1v4M8.500 5h3v-3h-3"/></svg>
    <svg width="12" height="12" class="me-2" fill="none" stroke="#333"><path d="M1 4.500h2l3-2.500v8L3 7.500H1zM7.500 4q1.500 2 0 4M9 2.500q3 3.500 0 7"/></svg>
    <div class="clock text-end">13:16<br>28.03.2026</div>
  </div>
</div>

<div class="dlg" role="dialog" aria-label="Kaynak Oluştur/Seç">
  <div class="dlg-title d-flex align-items-center"><svg width="10" height="10" class="me-1"><use href="#i-obs"/></svg>Kaynak Oluştur/Seç<button class="flat ms-auto" aria-label="Kapat"><svg width="9" height="9"><path d="M1 1l7 7M8 1L1 8" stroke="#333"/></svg></button></div>
  <div class="dlg-body">
    <div class="row-opt d-flex align-items-center"><input class="ring" type="radio" name="src" id="r1" checked><label for="r1">Yeni oluştur</label></div>
    <input class="name-in w-100 d-block my-1" id="srcname" aria-label="Kaynak adı" value="Oyun Yakalama">
    <div class="row-opt d-flex align-items-center"><input class="ring" type="radio" name="src" id="r2"><label for="r2">Varolanı Ekle</label></div>
    <div class="listing mt-1"></div>
    <div class="visible-opt d-flex align-items-center"><input class="tick" type="checkbox" id="vis" checked><label for="vis">Kaynağı görünür yap</label></div>
    <div class="answers d-flex justify-content-end"><button class="answer" style="width:54px">Tamam</button><button class="answer" style="width:43px">İptal</button></div>
  </div>
</div>
<svg class="pointer" width="9" height="14"><path d="M1 1v10l2.500-2 1.500 4 1.500-1-1.500-3.500h3z" fill="#fff" stroke="#333" stroke-width=".6"/></svg>
<script src="https://cdn.jsdelivr.net/npm/bootstrap@5.3.0/dist/js/bootstrap.bundle.min.js"></script>
<script>
const nameBox = document.getElementById('srcname');
nameBox.focus();
nameBox.select();
</script>
</body>
</html>
